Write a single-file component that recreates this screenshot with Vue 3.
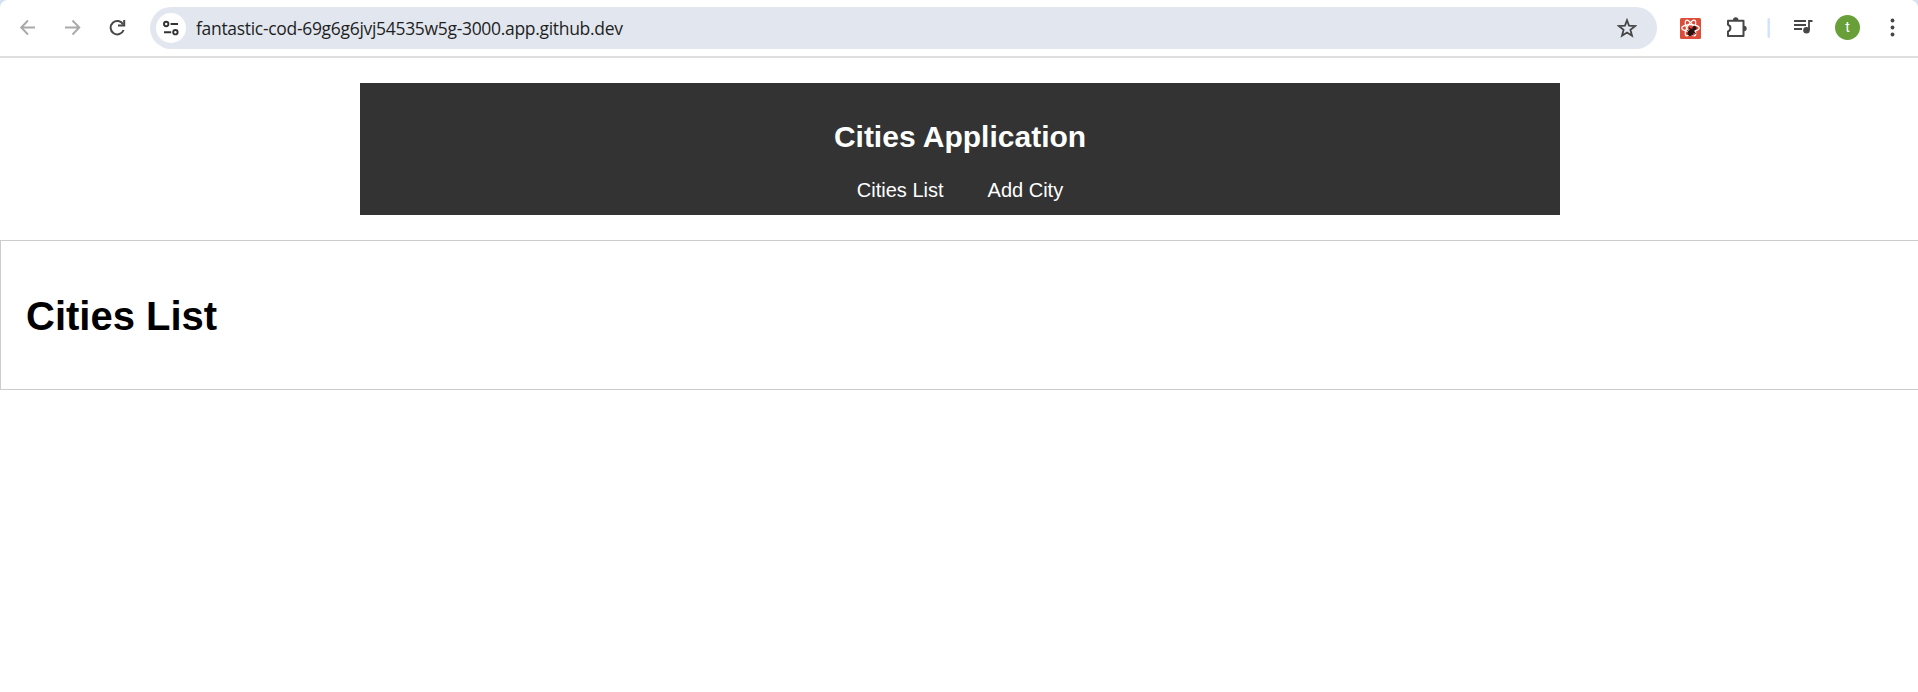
<script setup>
const title = 'Cities Application'
const links = ['Cities List', 'Add City']
</script>

<template>
  <div class="window">
    <header class="toolbar">
      <svg class="nav-icon" viewBox="0 0 54 56"><path d="M35 27.5H21.5M28 20.5l-6.8 7 6.8 7" fill="none" stroke="#a9a9a9" stroke-width="1.9"/></svg>
      <svg class="nav-icon gap" viewBox="0 0 46 56"><path d="M11 27.5h14.5M18.5 20.5l6.8 7-6.8 7" fill="none" stroke="#a9a9a9" stroke-width="1.9"/></svg>
      <svg class="reload" viewBox="0 0 50 56"><path d="M23.2 24.5A6.7 6.7 0 1 0 23.6 30" fill="none" stroke="#474747" stroke-width="2"/><path d="M24.2 20v5.5h-6.2" fill="none" stroke="#474747" stroke-width="2"/></svg>
      <div class="address">
        <div class="site">
          <svg width="30" height="30" viewBox="0 0 30 30"><g fill="none" stroke="#333" stroke-width="1.9"><circle cx="10.2" cy="11" r="2.2"/><path d="M14.6 11H22M8 19.2h7.2"/><circle cx="19.4" cy="19.2" r="2.2"/></g></svg>
        </div>
        <span class="url">fantastic-cod-69g6g6jvj54535w5g-3000.app.github.dev</span>
        <svg class="star" width="20" height="20" viewBox="0 0 20 20"><path d="M10 2.2l2 5.4 6.2.4-4.8 3.8 1.6 6-5-3.3-5 3.3 1.6-6L1.8 8l6.2-.4z" fill="none" stroke="#474747" stroke-width="1.8"/></svg>
      </div>
      <svg class="tools" width="261" height="56" viewBox="1657 0 261 56">
        <rect x="1680" y="18" width="21" height="21" rx="1.5" fill="#dc4c39"/>
        <g fill="none" stroke="#fff" stroke-width="1.2">
          <ellipse cx="1690.5" cy="28" rx="8.8" ry="3.4"/>
          <ellipse cx="1690.5" cy="28" rx="8.8" ry="3.4" transform="rotate(60 1690.5 28)"/>
          <ellipse cx="1690.5" cy="28" rx="8.8" ry="3.4" transform="rotate(-60 1690.5 28)"/>
        </g>
        <g transform="rotate(40 1692 31)" fill="#27120f" stroke="#27120f" stroke-width="1"><ellipse cx="1692" cy="32.5" rx="2.2" ry="3.6"/><circle cx="1692" cy="27.2" r="1.6"/><path d="M1687.5 30.5h9M1688 33.5h8" /></g>
        <path d="M1728 20.7h15.5V36H1728v-4.5a3.6 3.6 0 0 0 0-6.8z" fill="none" stroke="#474747" stroke-width="2" stroke-linejoin="round"/>
        <path d="M1733 20a2.7 2.7 0 0 1 5.4 0zM1744 25.8a2.7 2.7 0 0 1 0 5.4z" fill="#474747"/>
        <rect x="1767.5" y="18" width="2.5" height="20" rx="1.25" fill="#d3e3fd"/>
        <path d="M1794 21h12M1794 25h12M1794 29h8M1809 30v-9h3.5" fill="none" stroke="#474747" stroke-width="1.8"/>
        <circle cx="1806.5" cy="30.3" r="3.3" fill="#474747"/>
        <circle cx="1847.5" cy="27.5" r="12.5" fill="#689f38"/>
        <text x="1847.5" y="32" text-anchor="middle" class="initial">t</text>
        <g fill="#474747"><circle cx="1892.5" cy="20.5" r="1.9"/><circle cx="1892.5" cy="27.5" r="1.9"/><circle cx="1892.5" cy="34.5" r="1.9"/></g>
      </svg>
    </header>
    <nav class="menu">
      <h2>{{ title }}</h2>
      <div class="links"><a v-for="l in links" :key="l">{{ l }}</a></div>
    </nav>
    <main class="panel"><h1>Cities List</h1></main>
  </div>
</template>

<style>
body { background: #fff; overflow: hidden; }
</style>
<style scoped>
.window { width: 1918px; height: 692px; overflow: hidden; background: #fff; font-family: "Liberation Sans", Arial, sans-serif; }
.toolbar { box-sizing: border-box; height: 58px; display: flex; align-items: flex-start; border-bottom: 2px solid #dfdfdf; background: radial-gradient(circle at 8px 8px, #fff 7.5px, #d5e1f0 8.5px) 0 0 / 8px 8px no-repeat, radial-gradient(circle at 0 8px, #fff 7.5px, #d5e1f0 8.5px) 100% 0 / 8px 8px no-repeat, #fff; }
.nav-icon { width: 54px; height: 56px; flex: none; }
.nav-icon.gap { width: 46px; }
.reload { width: 50px; height: 56px; flex: none; }
.address { box-sizing: border-box; width: 1507px; height: 42px; margin-top: 7px; padding: 0 20px 0 6px; border-radius: 21px; background: #e2e7ef; display: flex; align-items: center; flex: none; }
.site { width: 30px; height: 30px; border-radius: 50%; background: #fff; }
.url { margin-left: 10px; font: 17.5px/24px "Segoe UI", "Open Sans", "Noto Sans", sans-serif; letter-spacing: -0.31px; color: #1f1f1f; white-space: nowrap; }
.star { margin-left: auto; }
.tools { flex: none; }
.initial { font: 14px Roboto, sans-serif; fill: #fff; }
.menu { box-sizing: border-box; width: 1200px; height: 132px; margin: 25px auto 0 360px; background: #333; color: #fff; text-align: center; padding-top: 37px; }
h2 { margin: 0; font-size: 30px; line-height: 34px; }
.links { display: flex; justify-content: center; gap: 44px; margin-top: 25px; font-size: 20px; line-height: 23px; }
.panel { box-sizing: border-box; width: 1930px; height: 150px; margin-top: 25px; border: 1px solid #ccc; padding: 52px 25px 0; }
h1 { margin: 0; font-size: 40px; line-height: 46px; color: #000; }
</style>
